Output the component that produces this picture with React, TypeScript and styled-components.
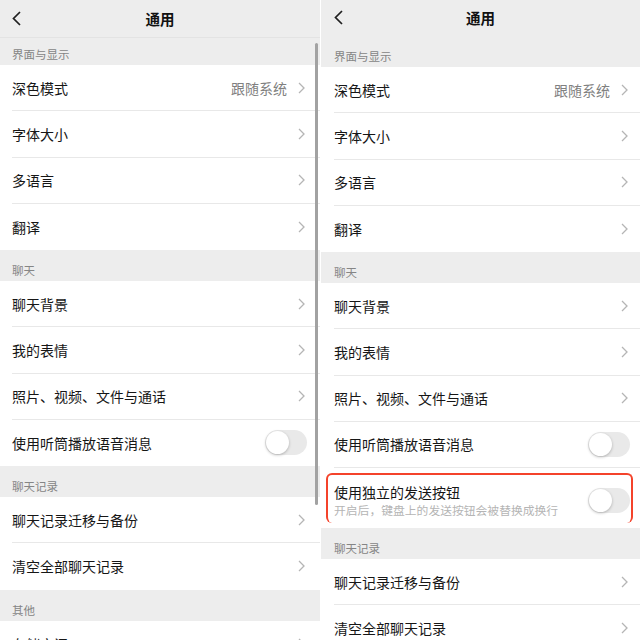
import React from "react";
import styled, { createGlobalStyle } from "styled-components";

type Item = {
  label: string;
  value?: string;
  toggle?: boolean;
  sub?: string;
  marked?: boolean;
};

type Group = { title: string; items: Item[] };

const leftGroups: Group[] = [
  {
    title: "界面与显示",
    items: [
      { label: "深色模式", value: "跟随系统" },
      { label: "字体大小" },
      { label: "多语言" },
      { label: "翻译" },
    ],
  },
  {
    title: "聊天",
    items: [
      { label: "聊天背景" },
      { label: "我的表情" },
      { label: "照片、视频、文件与通话" },
      { label: "使用听筒播放语音消息", toggle: true },
    ],
  },
  {
    title: "聊天记录",
    items: [{ label: "聊天记录迁移与备份" }, { label: "清空全部聊天记录" }],
  },
  { title: "其他", items: [{ label: "存储空间" }] },
];

const rightGroups: Group[] = [
  leftGroups[0],
  {
    title: "聊天",
    items: [
      ...leftGroups[1].items,
      {
        label: "使用独立的发送按钮",
        sub: "开启后，键盘上的发送按钮会被替换成换行",
        toggle: true,
        marked: true,
      },
    ],
  },
  leftGroups[2],
];

const GlobalStyle = createGlobalStyle`
  html, body {
    margin: 0;
    padding: 0;
    background: #fff;
  }
  body {
    font-family: "Noto Sans CJK SC", "Noto Sans", sans-serif;
    -webkit-font-smoothing: antialiased;
  }
`;

const Page = styled.div`
  width: 640px;
  height: 640px;
  display: flex;
  gap: 1px;
  overflow: hidden;
  background: #fff;
`;

const Screen = styled.div<{ $w: number }>`
  position: relative;
  flex: none;
  width: ${(p) => p.$w}px;
  height: 640px;
  overflow: hidden;
  background: #ededed;
`;

const Header = styled.div<{ $h: number; $pad: number; $line: boolean }>`
  box-sizing: border-box;
  height: ${(p) => p.$h}px;
  display: grid;
  grid-template-columns: 40px 1fr 40px;
  align-items: center;
  padding: 0 0 ${(p) => (p.$line ? 0 : 2)}px ${(p) => p.$pad}px;
  border-bottom: ${(p) => (p.$line ? "1px solid #e3e3e3" : "none")};

  h1 {
    margin: 0 0 0 -${(p) => p.$pad}px;
    text-align: center;
    font-size: 14.5px;
    font-weight: 600;
    color: #111;
  }
`;

const BackIcon = styled.svg`
  display: block;
  width: 9px;
  height: 15px;
`;

const Section = styled.div<{ $h: number; $pad: number }>`
  box-sizing: border-box;
  height: ${(p) => p.$h}px;
  display: flex;
  align-items: flex-end;
  padding: 0 0 3px ${(p) => p.$pad}px;
  font-size: 11.5px;
  line-height: 16px;
  color: #858585;
`;

const List = styled.div`
  background: #fff;
`;

const Row = styled.div<{ $pad: number; $h?: number }>`
  box-sizing: border-box;
  height: ${(p) => p.$h ?? 46.25}px;
  display: flex;
  padding-left: ${(p) => p.$pad}px;
  background: #fff;

  &:last-child > div {
    border-bottom: none;
  }
`;

const MarkRow = styled(Row)`
  padding: 5px 7px 5px 5px;
`;

const RowBody = styled.div<{ $right: number }>`
  flex: 1;
  display: flex;
  align-items: center;
  padding-right: ${(p) => p.$right}px;
  border-bottom: 1px solid #e8e8e8;
`;

const Label = styled.span`
  flex: 1;
  font-size: 14px;
  color: #161616;
  white-space: nowrap;
`;

const Value = styled.span`
  font-size: 14px;
  color: #808080;
  margin-right: 11px;
`;

const Chevron = styled.svg`
  display: block;
  width: 7px;
  height: 12px;
  margin-right: 2px;
`;

const Track = styled.div`
  width: 42px;
  height: 25px;
  flex: none;
  box-sizing: border-box;
  padding: 1px;
  border-radius: 13px;
  background: #e9e9e9;
`;

const Knob = styled.div`
  width: 23px;
  height: 23px;
  border-radius: 50%;
  background: #fff;
  box-shadow: 0 1px 3px rgba(0, 0, 0, 0.25);
`;

const MarkBox = styled.div`
  flex: 1;
  display: flex;
  align-items: center;
  padding: 2px 1px 0 6px;
  border: 2px solid #f4432b;
  border-radius: 6px;
`;

const TextCol = styled.div`
  flex: 1;
  display: flex;
  flex-direction: column;

  b {
    font-weight: 400;
    font-size: 14px;
    line-height: 20px;
    color: #161616;
  }

  small {
    font-size: 11.8px;
    line-height: 16px;
    color: #b5b5b5;
    white-space: nowrap;
  }
`;

const ScrollBar = styled.div`
  position: absolute;
  right: 2px;
  top: 43px;
  width: 3px;
  height: 462px;
  border-radius: 2px;
  background: #a2a2a2;
`;

const Arrow = () => (
  <Chevron viewBox="0 0 7 12">
    <polyline points="1,1 6,6 1,11" fill="none" stroke="#b5b5b5" strokeWidth="1.3" />
  </Chevron>
);

const Switch = () => (
  <Track>
    <Knob />
  </Track>
);

type ScreenProps = {
  width: number;
  groups: Group[];
  headerH: number;
  firstSection: number;
  line: boolean;
  padL: number;
  padR: number;
  scroll?: boolean;
};

const Phone = ({ width, groups, headerH, firstSection, line, padL, padR, scroll }: ScreenProps) => (
  <Screen $w={width}>
    <Header $h={headerH} $pad={padL} $line={line}>
      <BackIcon viewBox="0 0 9 15">
        <polyline points="8,1 1.5,7.5 8,14" fill="none" stroke="#1f1f1f" strokeWidth="1.7" />
      </BackIcon>
      <h1>通用</h1>
      <span />
    </Header>
    {groups.map((g, gi) => (
      <React.Fragment key={g.title}>
        <Section $h={gi === 0 ? firstSection : 31} $pad={padL}>
          {g.title}
        </Section>
        <List>
          {g.items.map((it) =>
            it.marked ? (
              <MarkRow key={it.label} $pad={5} $h={60}>
                <MarkBox>
                  <TextCol>
                    <b>{it.label}</b>
                    <small>{it.sub}</small>
                  </TextCol>
                  <Switch />
                </MarkBox>
              </MarkRow>
            ) : (
              <Row key={it.label} $pad={padL}>
                <RowBody $right={padR}>
                  <Label>{it.label}</Label>
                  {it.value && <Value>{it.value}</Value>}
                  {it.toggle ? <Switch /> : <Arrow />}
                </RowBody>
              </Row>
            )
          )}
        </List>
      </React.Fragment>
    ))}
    {scroll && <ScrollBar />}
  </Screen>
);

export default function App() {
  return (
    <Page>
      <GlobalStyle />
      <Phone width={320} groups={leftGroups} headerH={38} firstSection={27} line padL={12} padR={13} scroll />
      <Phone width={319} groups={rightGroups} headerH={36} firstSection={31} line={false} padL={13} padR={10} />
    </Page>
  );
}
